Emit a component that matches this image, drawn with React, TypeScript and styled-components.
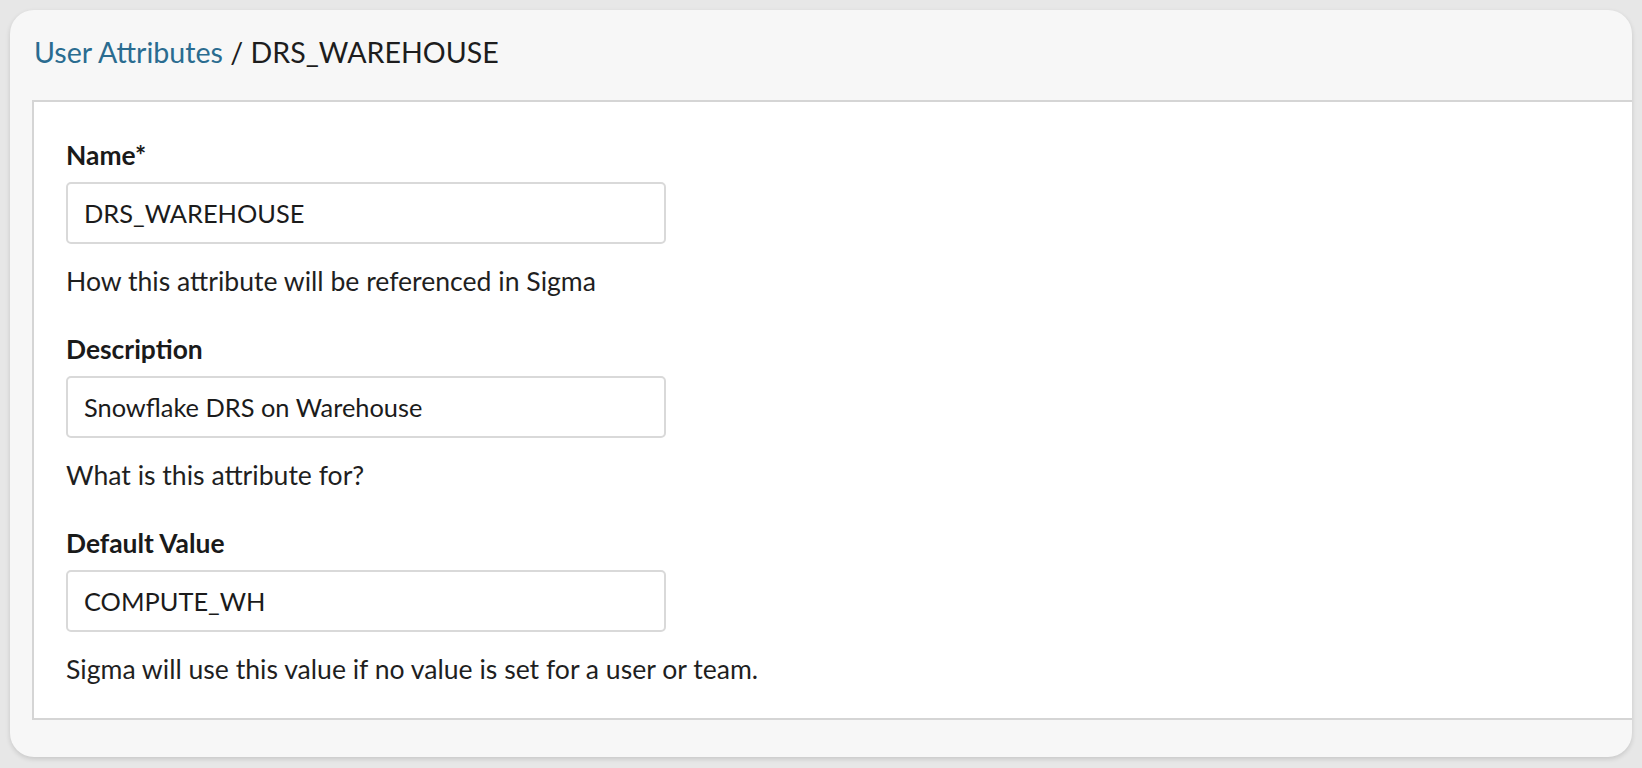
import React from "react";
import styled, { createGlobalStyle } from "styled-components";

const GlobalStyle = createGlobalStyle`
  html, body {
    margin: 0;
    padding: 0;
    background: #e7e7e7;
  }
  body {
    font-family: Lato, "Noto Sans", sans-serif;
    color: #1b1b1b;
  }
`;

const Page = styled.div`
  padding: 10px 10px 11px 10px;
  box-sizing: border-box;
  height: 768px;
`;

const Card = styled.div`
  background: #f7f7f7;
  border-radius: 24px;
  box-shadow: 0 2px 5px rgba(0, 0, 0, 0.14);
  overflow: hidden;
  padding-bottom: 37px;
  height: 100%;
  box-sizing: border-box;
  display: flex;
  flex-direction: column;
`;

const Header = styled.div`
  height: 90px;
  box-sizing: border-box;
  padding: 22px 24px 0;
  font-size: 28.6px;
  line-height: 40px;
  color: #1d1d1d;
`;

const Crumb = styled.a`
  color: #2a6c90;
  text-decoration: none;
  cursor: pointer;
`;

const Panel = styled.div`
  flex: 1;
  margin-left: 22px;
  background: #fff;
  border: 2px solid #d5d5d5;
  border-right: none;
  padding: 35px 32px 0;
`;

const Field = styled.div`
  display: flex;
  flex-direction: column;
  & + & {
    margin-top: 32px;
  }
`;

const Label = styled.label`
  font-size: 26.4px;
  font-weight: 700;
  line-height: 36px;
  margin-bottom: 9px;
  color: #1a1a1a;
`;

const Input = styled.input`
  width: 600px;
  height: 62px;
  box-sizing: border-box;
  border: 2px solid #d9d9d9;
  border-radius: 5px;
  padding: 0 16px;
  font-family: inherit;
  font-size: 25.4px;
  color: #1b1b1b;
  background: #fff;
  outline: none;
`;

const Help = styled.div`
  margin-top: 19px;
  font-size: 26.6px;
  line-height: 36px;
  color: #1f1f1f;
`;

const fields = [
  {
    label: "Name*",
    value: "DRS_WAREHOUSE",
    help: "How this attribute will be referenced in Sigma",
  },
  {
    label: "Description",
    value: "Snowflake DRS on Warehouse",
    help: "What is this attribute for?",
  },
  {
    label: "Default Value",
    value: "COMPUTE_WH",
    help: "Sigma will use this value if no value is set for a user or team.",
  },
];

export default function App() {
  return (
    <>
      <GlobalStyle />
      <Page>
        <Card>
          <Header>
            <Crumb>User Attributes</Crumb> / DRS_WAREHOUSE
          </Header>
          <Panel>
            {fields.map((f) => (
              <Field key={f.label}>
                <Label>{f.label}</Label>
                <Input defaultValue={f.value} />
                <Help>{f.help}</Help>
              </Field>
            ))}
          </Panel>
        </Card>
      </Page>
    </>
  );
}
